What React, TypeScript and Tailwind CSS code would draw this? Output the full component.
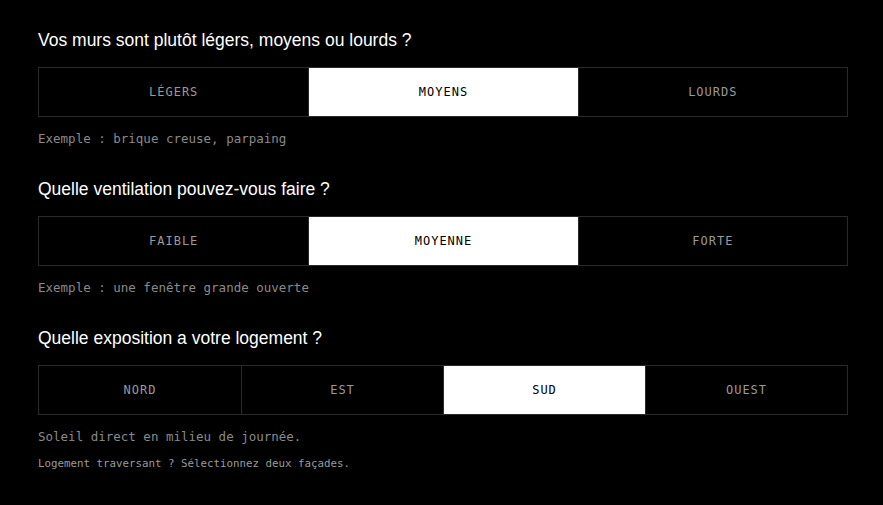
import React from "react";

type Question = {
  title: string;
  options: string[];
  selected: number;
  notes: { text: string; small?: boolean }[];
};

const questions: Question[] = [
  {
    title: "Vos murs sont plutôt légers, moyens ou lourds ?",
    options: ["LÉGERS", "MOYENS", "LOURDS"],
    selected: 1,
    notes: [{ text: "Exemple : brique creuse, parpaing" }],
  },
  {
    title: "Quelle ventilation pouvez-vous faire ?",
    options: ["FAIBLE", "MOYENNE", "FORTE"],
    selected: 1,
    notes: [{ text: "Exemple : une fenêtre grande ouverte" }],
  },
  {
    title: "Quelle exposition a votre logement ?",
    options: ["NORD", "EST", "SUD", "OUEST"],
    selected: 2,
    notes: [
      { text: "Soleil direct en milieu de journée." },
      { text: "Logement traversant ? Sélectionnez deux façades.", small: true },
    ],
  },
];

const mono = "font-['DejaVu_Sans_Mono','Liberation_Mono',monospace]";

function Segmented({ options, selected }: { options: string[]; selected: number }) {
  return (
    <div
      className={`grid border border-[#2a2a2a] h-[50px] ${
        options.length === 4 ? "grid-cols-4" : "grid-cols-3"
      }`}
    >
      {options.map((o, i) => (
        <button
          key={o}
          className={`flex items-center justify-center text-[12px] tracking-[1px] ${mono} ${
            i > 0 ? "border-l border-[#2a2a2a]" : ""
          } ${i === selected ? "bg-white text-black" : "bg-black text-[#9a9a9a]"}`}
        >
          {o}
        </button>
      ))}
    </div>
  );
}

export default function App() {
  return (
    <div className="min-h-[505px] w-[883px] bg-black pl-[38px] pr-[35px] pt-[29px]">
      {questions.map((q, qi) => (
        <section key={qi} className="mb-[29px]">
          <h2 className="font-['Liberation_Sans',Arial,sans-serif] text-[17.5px] leading-[23px] text-white">
            {q.title}
          </h2>
          <div className="mt-[15px]">
            <Segmented options={q.options} selected={q.selected} />
          </div>
          {q.notes.map((n, ni) =>
            n.small ? (
              <p
                key={ni}
                className={`${mono} mt-[9px] text-[10.8px] leading-[16px] text-[#9a9a9a]`}
              >
                {n.text}
              </p>
            ) : (
              <p
                key={ni}
                className={`${mono} mt-[12px] text-[12.5px] leading-[20px] text-[#8a8a8a]`}
              >
                {n.text}
              </p>
            )
          )}
        </section>
      ))}
    </div>
  );
}
